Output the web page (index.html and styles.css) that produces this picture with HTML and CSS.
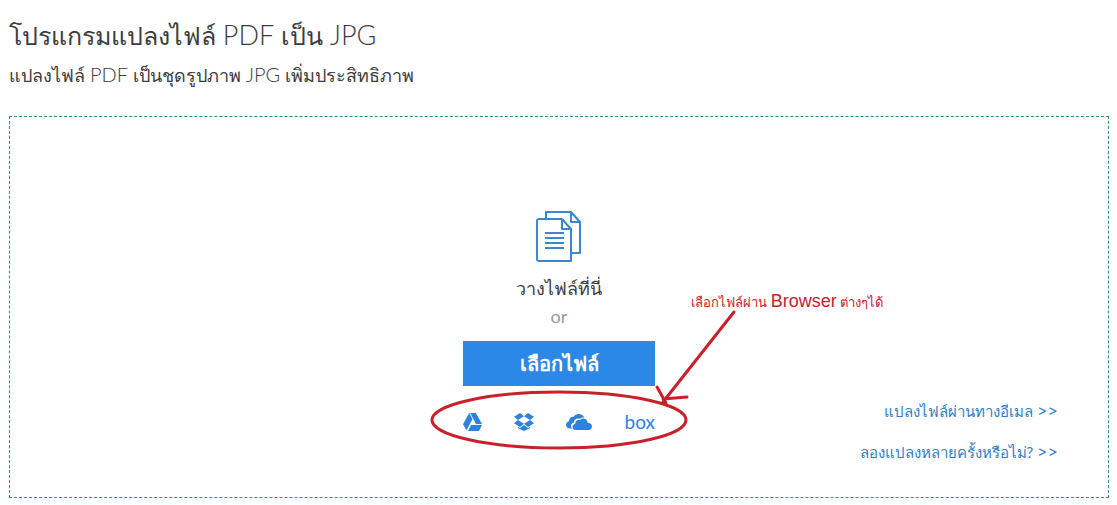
FILE: index.html
```
<!DOCTYPE html>
<html lang="th">
<head>
    <meta charset="UTF-8">
    <meta name="viewport" content="width=device-width, initial-scale=1.0">
    <title>โปรแกรมแปลงไฟล์ PDF เป็น JPG</title>
    <link rel="stylesheet" href="styles.css">
</head>
<body>
    <header class="page-header">
        <h1>โปรแกรมแปลงไฟล์ <span>PDF</span> เป็น <span>JPG</span></h1>
        <p>แปลงไฟล์ <span>PDF</span> เป็นชุดรูปภาพ <span>JPG</span> เพิ่มประสิทธิภาพ</p>
    </header>

    <main class="drop-area">
        <div class="picker">
            <svg class="files-icon" viewBox="0 0 46 52" aria-hidden="true">
                <path d="M10 7V1h25l9 10v31h-8M35 1v10h9"/>
                <path d="M3 8h23l9 10v32H3a2 2 0 0 1-2-2V10a2 2 0 0 1 2-2zM26 8v10h9"/>
                <path d="M9 22h19M9 27h19M9 32h19M9 37h19"/>
            </svg>
            <p class="drop-text">วางไฟล์ที่นี่</p>
            <p class="or-text">or</p>
            <button type="button" class="choose-btn">เลือกไฟล์</button>
            <div class="sources">
                <a href="#drive" aria-label="Google Drive">
                    <svg width="19" height="18" viewBox="0 0 19 18"><path d="M6.2 0L0 11.2 3.5 17.5 9.5 6zM7.2 0h5.600L19 11h-6zM8 12h11l-3 6H5z"/></svg>
                </a>
                <a href="#dropbox" aria-label="Dropbox">
                    <svg width="20" height="18" viewBox="0 0 20 18"><path d="M6 0l4 3.2L4 7 0 3.8zM14 0l6 3.8L16 7l-6-3.8zM4 7l6 3.8L6 14l-6-3.8zM16 7l4 3.2L14 14l-4-3.2zM10 12l4 3 2-1v1.2L10 18l-6-2.8V14l2 1z"/></svg>
                </a>
                <a href="#onedrive" aria-label="OneDrive">
                    <svg width="26" height="16" viewBox="0 0 26 16"><path d="M6 14.5H4A4 4 0 0 1 0 11c0-2 1.4-3.5 3-3.8C3 4 5 2.5 7.5 2.7 9 1 10.6 0 12.7 0c2.5 0 4.500 1.300 5.500 3.500-1.700-.2-3 .3-4 1.300-3.600-1-6.300 1-6.500 4C5 9.500 4.200 12.200 6 14.500z"/><path d="M10 16c-2.200 0-3.500-1.300-3.500-3s1.100-2.900 2.700-3.100C9 7.200 11 5.600 14 6.200c1-1.400 2.300-2 4-1.700 2.200.4 3.500 2 3.600 4.200 2.700 0 4.400 1.500 4.400 3.600S24.500 16 22.500 16z"/></svg>
                </a>
                <a href="#box" class="box-link">box</a>
            </div>

            <!-- hand-drawn note over the picker -->
            <svg class="note-lines" width="308" height="150" viewBox="0 0 308 150" aria-hidden="true">
                <ellipse cx="130" cy="112" rx="127" ry="28"/>
                <path d="M305 4L234 94M228 79l9 16M234 91l24-2"/>
            </svg>
            <p class="note-text">เลือกไฟล์ผ่าน <span>Browser</span> ต่างๆได้</p>
        </div>

        <nav class="more-links">
            <a href="#email">แปลงไฟล์ผ่านทางอีเมล <span>&gt;&gt;</span></a>
            <a href="#batch">ลองแปลงหลายครั้งหรือไม่? <span>&gt;&gt;</span></a>
        </nav>
    </main>
</body>
</html>
```

FILE: styles.css
```
* {
    box-sizing: border-box;
}
body {
    margin: 0;
    padding: 15px 8px 7px 9px;
    background: #fff;
    color: #3c3c3c;
    font-family: Lato, "Liberation Sans", Arial, sans-serif;
}
h1, p {
    margin: 0;
    font-weight: 300;
}
h1 {
    font-size: 25px;
    line-height: 40px;
}
h1 span {
    font-size: 27px;
}
.page-header p {
    font-size: 18px;
    line-height: 38px;
}
.page-header p span {
    font-size: 20px;
}
.drop-area {
    display: grid;
    grid-template-columns: 1fr 192px 1fr;
    margin-top: 22px;
    padding: 94px 50px 25px;
    border: 1px dashed #3585a0;
}
.picker {
    position: relative;
    grid-column: 2;
    display: flex;
    flex-direction: column;
    align-items: center;
    padding-bottom: 38px;
}
.files-icon {
    width: 46px;
    height: 52px;
    fill: none;
    stroke: #3b86d0;
    stroke-width: 2;
    stroke-linejoin: round;
}
.drop-text {
    margin-top: 11px;
    font-size: 18px;
    font-weight: 400;
    line-height: 28px;
}
.or-text {
    color: #999;
    font-size: 18px;
    font-weight: 400;
    line-height: 28px;
}
.choose-btn {
    width: 100%;
    height: 45px;
    margin-top: 11px;
    border: none;
    background: #2b88e6;
    color: #fff;
    font: 700 20px Lato, "Liberation Sans", Arial, sans-serif;
    cursor: pointer;
}
.sources {
    display: flex;
    justify-content: space-between;
    align-items: center;
    width: 100%;
    height: 24px;
    margin-top: 24px;
}
.sources a {
    display: flex;
    color: #2f82da;
    text-decoration: none;
}
.sources svg {
    fill: #2f82da;
}
.sources .box-link {
    font-size: 19px;
    line-height: 24px;
}
.note-lines {
    position: absolute;
    top: 97px;
    left: -34px;
    fill: none;
    stroke: #c9202c;
    stroke-width: 3;
    stroke-linecap: round;
}
.note-text {
    position: absolute;
    top: 78px;
    left: 228px;
    color: #c9202c;
    font-family: "Liberation Sans", Arial, sans-serif;
    font-size: 13px;
    font-weight: 400;
    line-height: 24px;
    white-space: nowrap;
}
.note-text span {
    font-size: 18px;
}
.more-links {
    display: flex;
    flex-direction: column;
    align-items: flex-end;
    align-self: end;
}
.more-links a {
    color: #2f7fc8;
    font-size: 15px;
    line-height: 40px;
    text-decoration: none;
    white-space: nowrap;
}
.more-links span {
    font-size: 18px;
}
```
